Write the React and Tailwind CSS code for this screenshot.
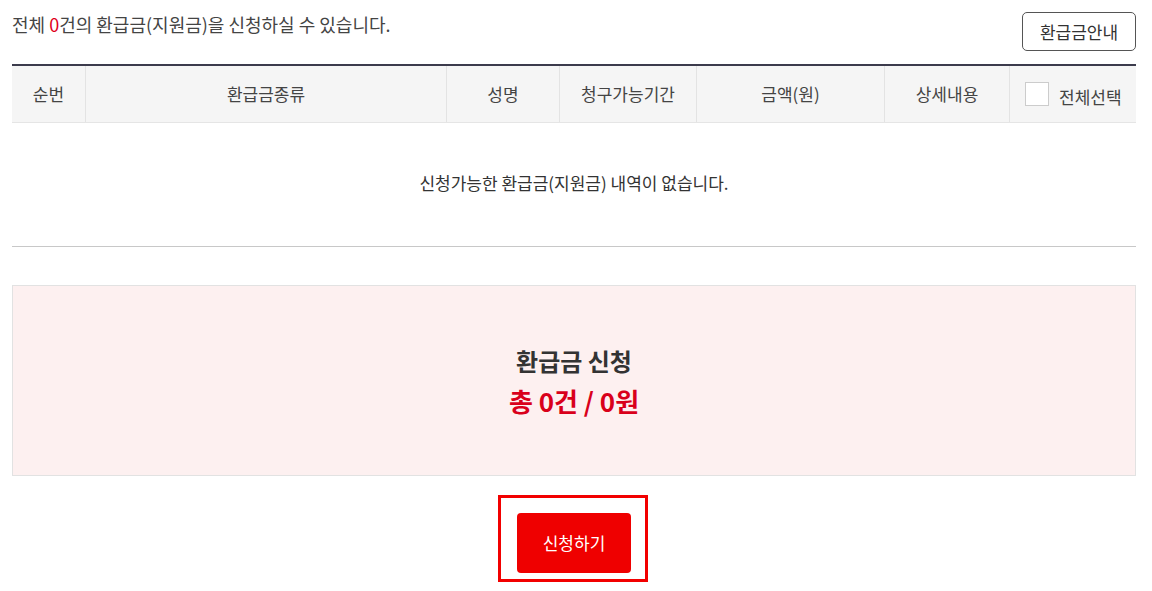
import React from 'react';

const columns = [
  { label: '순번', w: 'w-[74px]' },
  { label: '환급금종류', w: 'w-[361px]' },
  { label: '성명', w: 'w-[113px]' },
  { label: '청구가능기간', w: 'w-[137px]' },
  { label: '금액(원)', w: 'w-[188px]' },
  { label: '상세내용', w: 'w-[125px]' },
];

export default function App() {
  return (
    <div className="w-[1152px] h-[591px] bg-white pl-3 pr-4 text-[#333] [font-family:'Noto_Sans_CJK_KR','Noto_Sans',sans-serif]">
      {/* Top summary + guide button */}
      <div className="flex items-start justify-between pt-3 h-[64px]">
        <p className="text-[18px] leading-[26px] text-[#444] -mt-[1px]">
          전체 <span className="text-[#e0001b]">0</span>건의 환급금(지원금)을 신청하실 수 있습니다.
        </p>
        <button className="h-[39px] w-[114px] rounded-[5px] border border-[#555] text-[17px] text-[#333] bg-white">
          환급금안내
        </button>
      </div>

      {/* Table */}
      <div className="border-t-2 border-[#3c3b4c]">
        <div className="flex h-[57px] bg-[#f5f5f5] border-b border-[#e5e5e5] text-[17px] text-[#444]">
          {columns.map((c) => (
            <div
              key={c.label}
              className={`${c.w} flex items-center justify-center border-r border-[#e3e3e3] pb-[1px]`}
            >
              {c.label}
            </div>
          ))}
          <div className="flex-1 flex items-center pl-[15px] gap-[10px]">
            <span className="w-[24px] h-[24px] border border-[#ccc] bg-white" />
            <span className="pt-[6px]">전체선택</span>
          </div>
        </div>
        <div className="h-[124px] flex items-center justify-center border-b border-[#c8c8c8] text-[17px] text-[#333] pb-[4px]">
          신청가능한 환급금(지원금) 내역이 없습니다.
        </div>
      </div>

      {/* Summary box */}
      <div className="mt-[38px] h-[191px] bg-[#fdf0f0] border border-[#e2e2e2] flex flex-col items-center justify-center">
        <div className="text-[24px] font-bold text-[#333] leading-[40px]">환급금 신청</div>
        <div className="text-[26px] font-bold text-[#d9001b] leading-[40px]">총 0건 / 0원</div>
      </div>

      {/* Apply button */}
      <div className="flex justify-center mt-[19px] pr-[2px]">
        <div className="border-[3px] border-[#f20000] pl-[16px] pr-[14px] pt-[15px] pb-[6px]">
          <button className="w-[114px] h-[60px] rounded-[4px] bg-[#ef0000] text-white text-[17px]">
            신청하기
          </button>
        </div>
      </div>
    </div>
  );
}
